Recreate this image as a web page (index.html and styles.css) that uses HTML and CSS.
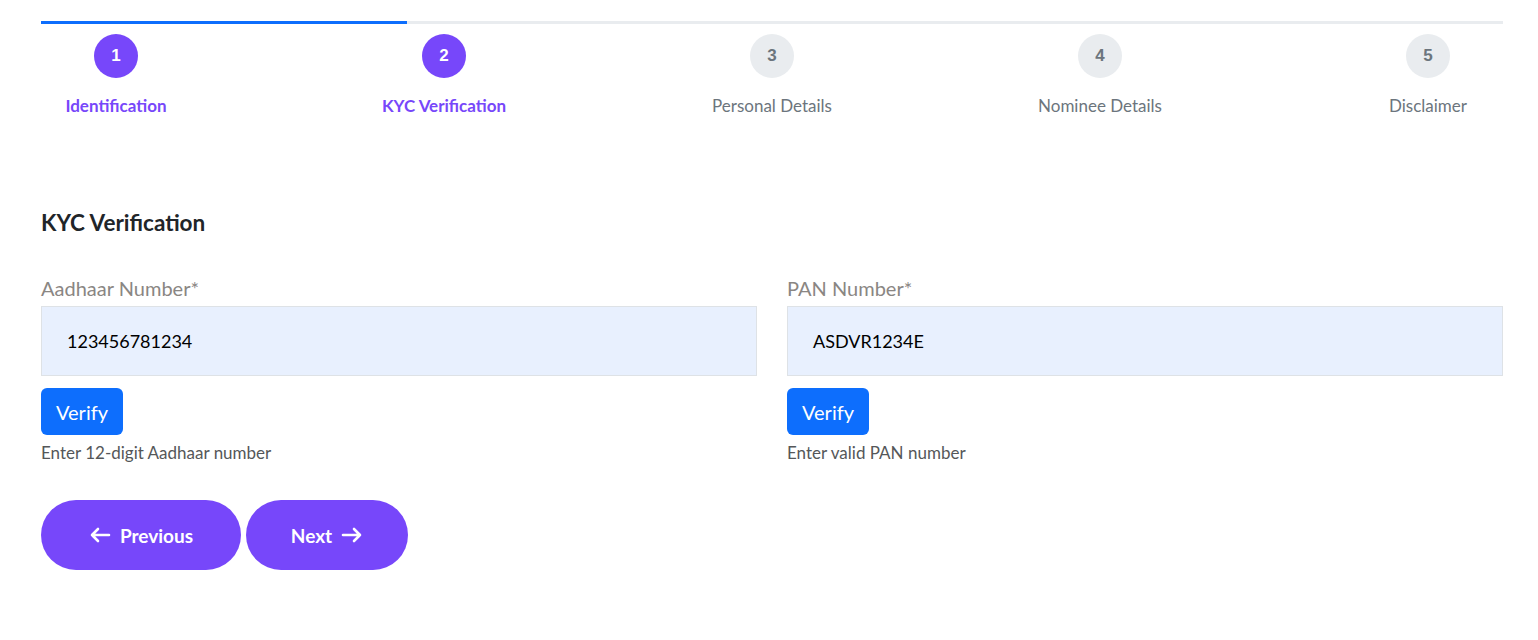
FILE: index.html
```html
<!DOCTYPE html>
<html lang="en">
<head>
<meta charset="utf-8">
<title>KYC Verification</title>
<link rel="stylesheet" href="styles.css">
</head>
<body>
<div class="wrap">
  <div class="progress"><div class="progress-fill" style="width:25%"></div></div>
  <div class="steps">
    <div class="step active"><div class="circle">1</div><div class="step-label">Identification</div></div>
    <div class="step active"><div class="circle">2</div><div class="step-label">KYC Verification</div></div>
    <div class="step"><div class="circle">3</div><div class="step-label">Personal Details</div></div>
    <div class="step"><div class="circle">4</div><div class="step-label">Nominee Details</div></div>
    <div class="step"><div class="circle">5</div><div class="step-label">Disclaimer</div></div>
  </div>

  <h2 class="section-title">KYC Verification</h2>

  <div class="fields">
    <div class="field">
      <label class="field-label">Aadhaar Number*</label>
      <div class="input">123456781234</div>
      <button class="verify">Verify</button>
      <div class="help">Enter 12-digit Aadhaar number</div>
    </div>
    <div class="field">
      <label class="field-label">PAN Number*</label>
      <div class="input">ASDVR1234E</div>
      <button class="verify">Verify</button>
      <div class="help">Enter valid PAN number</div>
    </div>
  </div>

  <div class="nav">
    <button class="nav-btn prev">
      <svg width="22" height="16" viewBox="0 0 22 16"><path d="M20 8H3M9 2L3 8l6 6" fill="none" stroke="#fff" stroke-width="2.6" stroke-linecap="round" stroke-linejoin="round"/></svg>
      Previous
    </button>
    <button class="nav-btn next">
      Next
      <svg width="22" height="16" viewBox="0 0 22 16"><path d="M2 8h17M13 2l6 6-6 6" fill="none" stroke="#fff" stroke-width="2.6" stroke-linecap="round" stroke-linejoin="round"/></svg>
    </button>
  </div>
</div>
</body>
</html>
```

FILE: styles.css
```css
* { box-sizing: border-box; }
body {
  margin: 0;
  background: #fff;
  font-family: "Lato", "Noto Sans", sans-serif;
  color: #212529;
}
.wrap {
  width: 1462px;
  margin-left: 41px;
  padding-top: 21px;
}
.progress {
  height: 3px;
  background: #e9ecef;
}
.progress-fill {
  height: 100%;
  background: #0d6efd;
}
.steps {
  display: flex;
  justify-content: space-between;
  margin-top: 10px;
}
.step {
  width: 150px;
  display: flex;
  flex-direction: column;
  align-items: center;
}
.circle {
  width: 44px;
  height: 44px;
  border-radius: 50%;
  background: #e9ecef;
  color: #6c757d;
  font-family: "Liberation Sans", Arial, sans-serif;
  font-weight: 700;
  font-size: 17px;
  display: flex;
  align-items: center;
  justify-content: center;
}
.step-label {
  margin-top: 16px;
  font-size: 17px;
  line-height: 24px;
  color: #6c757d;
  white-space: nowrap;
}
.step.active .circle {
  background: #7747fa;
  color: #fff;
}
.step.active .step-label {
  color: #7747fa;
  font-weight: 700;
}
.section-title {
  margin: 90px 0 0;
  font-size: 22.5px;
  line-height: 30px;
  font-weight: 700;
  color: #212529;
}
.fields {
  display: grid;
  grid-template-columns: 1fr 1fr;
  column-gap: 30px;
  margin-top: 38px;
}
.field {
  display: flex;
  flex-direction: column;
  align-items: flex-start;
}
.field-label {
  font-size: 20px;
  line-height: 24px;
  color: #8a8683;
  margin-bottom: 6px;
}
.input {
  width: 100%;
  height: 70px;
  background: #e8f0fe;
  border: 1px solid #dee2e6;
  padding: 0 25px;
  display: flex;
  align-items: center;
  font-size: 18px;
  color: #000;
}
.verify {
  margin-top: 12px;
  height: 47px;
  padding: 0 15px;
  border: 0;
  border-radius: 6px;
  background: #0d6efd;
  color: #fff;
  font-family: inherit;
  font-size: 20px;
  cursor: pointer;
}
.help {
  margin-top: 6px;
  font-size: 17px;
  line-height: 24px;
  color: #555759;
}
.nav {
  display: flex;
  gap: 5px;
  margin-top: 35px;
}
.nav-btn {
  height: 70px;
  border: 0;
  border-radius: 35px;
  background: #7747fa;
  color: #fff;
  font-family: inherit;
  font-weight: 700;
  font-size: 19px;
  display: flex;
  align-items: center;
  justify-content: center;
  gap: 9px;
  cursor: pointer;
}
.prev { width: 200px; }
.next { width: 162px; }
```
